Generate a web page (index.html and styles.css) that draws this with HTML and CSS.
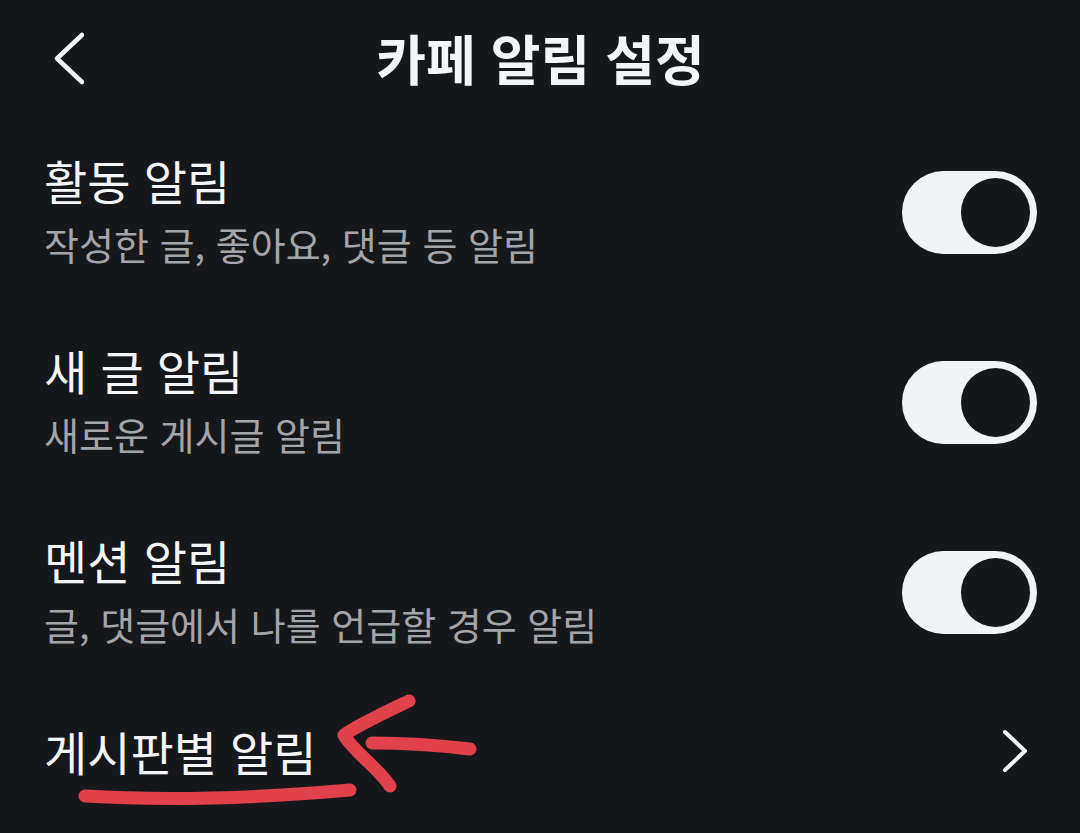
FILE: index.html
```html
<!DOCTYPE html>
<html lang="ko">
<head>
    <meta charset="UTF-8">
    <meta name="viewport" content="width=device-width, initial-scale=1.0">
    <title>카페 알림 설정</title>
    <link rel="stylesheet" href="styles.css">
</head>
<body>
<div class="screen">
    <!-- top bar -->
    <header class="topbar">
        <button class="back" aria-label="뒤로">
            <svg width="40" height="56" viewBox="0 0 40 56">
                <path d="M38 4 L13 27.5 L38 51" fill="none" stroke="#f4f5f7" stroke-width="4.5" stroke-linecap="round" stroke-linejoin="round"/>
            </svg>
        </button>
        <h1 class="title">카페 알림 설정</h1>
        <span></span>
    </header>

    <ul class="settings">
        <li class="setting">
            <div class="setting-text">
                <div class="setting-title">활동 알림</div>
                <div class="setting-desc">작성한 글, 좋아요, 댓글 등 알림</div>
            </div>
            <span class="switch on"><span class="knob"></span></span>
        </li>
        <li class="setting">
            <div class="setting-text">
                <div class="setting-title">새 글 알림</div>
                <div class="setting-desc">새로운 게시글 알림</div>
            </div>
            <span class="switch on"><span class="knob"></span></span>
        </li>
        <li class="setting">
            <div class="setting-text">
                <div class="setting-title">멘션 알림</div>
                <div class="setting-desc">글, 댓글에서 나를 언급할 경우 알림</div>
            </div>
            <span class="switch on"><span class="knob"></span></span>
        </li>
        <li class="setting link">
            <div class="setting-title">게시판별 알림</div>
            <svg class="chevron" width="30" height="46" viewBox="0 0 30 46">
                <path d="M5 4 L25 23 L5 42" fill="none" stroke="#f4f5f7" stroke-width="4" stroke-linecap="round" stroke-linejoin="round"/>
            </svg>
        </li>
    </ul>

    <!-- hand drawn marks on top of the screenshot -->
    <svg class="annotation" width="1080" height="833" viewBox="0 0 1080 833">
        <g fill="none" stroke="#e0414b" stroke-width="13" stroke-linecap="round" stroke-linejoin="round">
            <path d="M85 796 Q202 803 350 790"/>
            <path d="M409 701 C388 711 360 724 344 735 C352 750 378 768 390 786"/>
            <path d="M372 743 Q420 743 470 749"/>
        </g>
    </svg>
</div>
</body>
</html>
```

FILE: styles.css
```css
body {
    margin: 0;
    padding: 0;
    background-color: #16171b;
    font-family: "Noto Sans CJK KR", "Noto Sans", sans-serif;
    color: #f4f5f7;
}

.screen {
    position: relative;
    width: 1080px;
    height: 833px;
    overflow: hidden;
}

.topbar {
    display: grid;
    grid-template-columns: 1fr auto 1fr;
    align-items: center;
    height: 117px;
    padding: 0 43px 0 44px;
    box-sizing: border-box;
}

.back {
    justify-self: start;
    display: flex;
    padding: 0;
    border: 0;
    background: none;
}

.title {
    margin: 0;
    font-size: 54px;
    font-weight: 700;
    line-height: 60px;
    padding-bottom: 2px;
}

.settings {
    list-style: none;
    margin: 0;
    padding: 0 43px 0 44px;
}

.setting {
    display: flex;
    align-items: center;
    justify-content: space-between;
    height: 190px;
}

.setting-text {
    display: flex;
    flex-direction: column;
    padding-bottom: 4px;
}

.setting-title {
    font-size: 47px;
    line-height: 56px;
    color: #f4f5f7;
}

.setting-desc {
    margin-top: 12px;
    font-size: 38px;
    line-height: 48px;
    color: #a3a5aa;
}

.setting.link {
    height: 128px;
}

.chevron {
    margin-right: 7px;
}

/* toggle switch */
.switch {
    display: flex;
    align-items: center;
    justify-content: flex-end;
    width: 135px;
    height: 83px;
    padding: 0 7px;
    box-sizing: border-box;
    border-radius: 42px;
    background-color: #f2f3f5;
}

.knob {
    width: 69px;
    height: 69px;
    border-radius: 50%;
    background-color: #16171b;
}

.annotation {
    position: absolute;
    top: 0;
    left: 0;
    pointer-events: none;
}
```
